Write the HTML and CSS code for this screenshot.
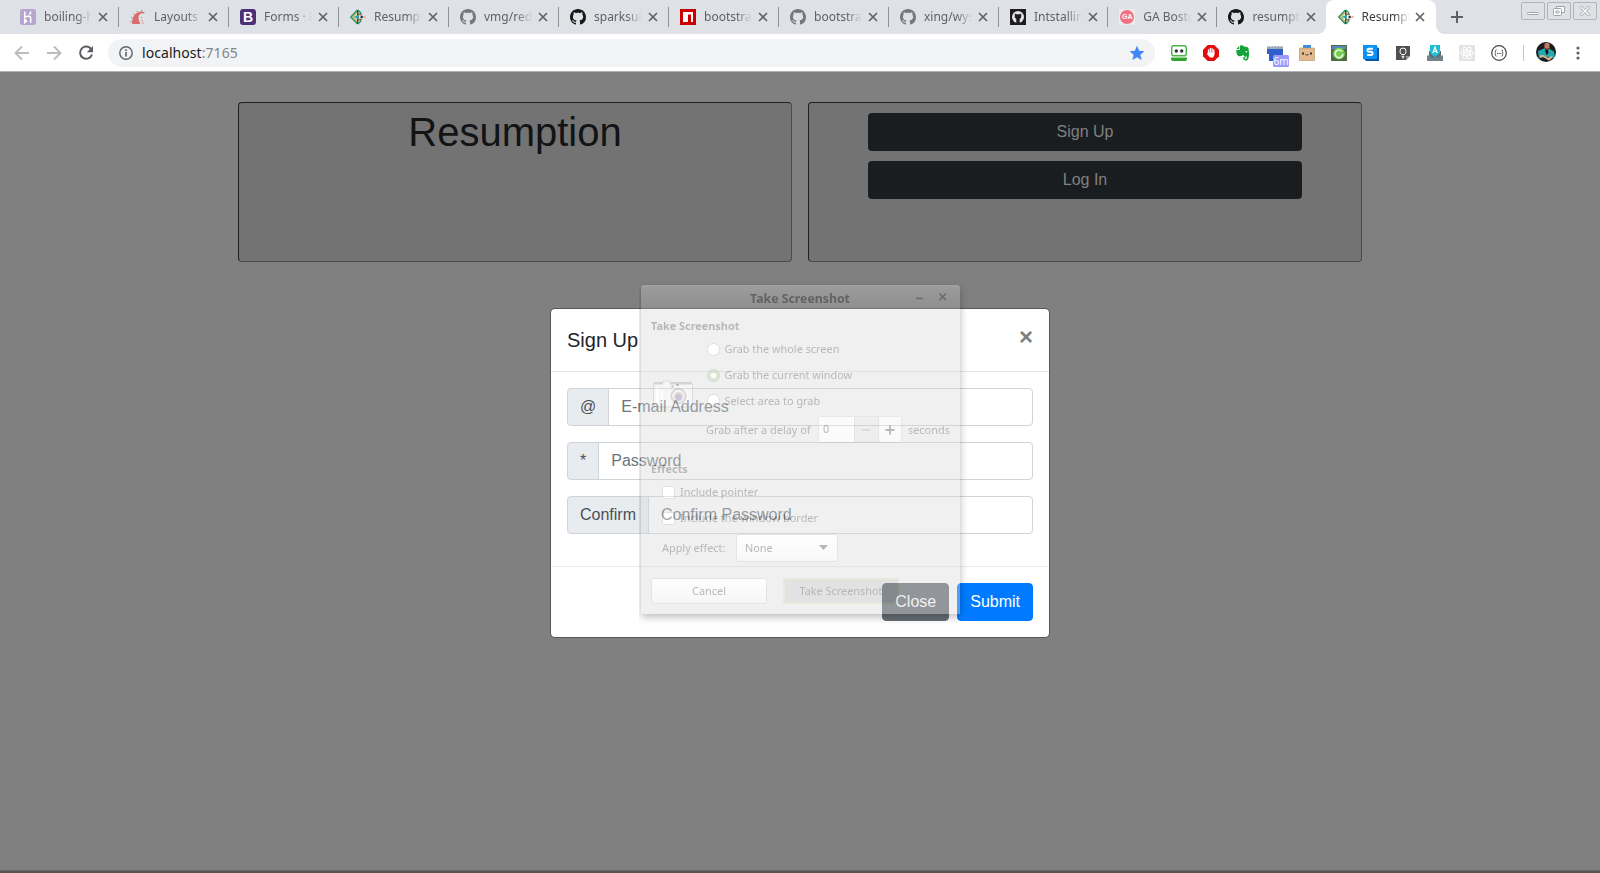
FILE: index.html
```html
<!DOCTYPE html>
<html lang="en">
<head>
<meta charset="utf-8">
<title>Resumption</title>
<link rel="stylesheet" href="styles.css">
</head>
<body>
<svg class="defs" width="0" height="0">
  <symbol id="github" viewBox="0 0 16 16"><path d="M8 0C3.58 0 0 3.58 0 8c0 3.54 2.29 6.53 5.47 7.59.4.07.55-.17.55-.38 0-.19-.01-.82-.01-1.49-2.01.37-2.53-.49-2.69-.94-.09-.23-.48-.94-.82-1.13-.28-.15-.68-.52-.01-.53.63-.01 1.08.58 1.23.82.72 1.21 1.87.87 2.33.66.07-.52.28-.87.51-1.07-1.78-.2-3.64-.89-3.64-3.95 0-.87.31-1.59.82-2.15-.08-.2-.36-1.02.08-2.12 0 0 .67-.21 2.2.82.64-.18 1.32-.27 2-.27s1.36.09 2 .27c1.53-1.04 2.2-.82 2.2-.82.44 1.1.16 1.92.08 2.12.51.56.82 1.27.82 2.15 0 3.07-1.87 3.75-3.65 3.95.29.25.54.73.54 1.48 0 1.07-.01 1.93-.01 2.2 0 .21.15.46.55.38A8.01 8.01 0 0 0 16 8c0-4.42-3.58-8-8-8z"/></symbol>
  <symbol id="close" viewBox="0 0 10 10"><path d="M1 1l8 8M9 1L1 9" stroke="#5f6368" stroke-width="1.7" fill="none"/></symbol>
  <symbol id="diamond" viewBox="0 0 16 16">
    <path d="M7.500 1L1 8l6.500 7" fill="none" stroke="#2f9a72" stroke-width="1.700"/>
    <path d="M7 3.500L3 8l4 4.500" fill="none" stroke="#e4ad42" stroke-width="1.300"/>
    <path d="M7.800 1v14" fill="none" stroke="#1c4a50" stroke-width="1.500"/>
    <path d="M8 1l3 3-5 4 5 4-3 3" fill="none" stroke="#2f9a72" stroke-width="1.200"/>
    <path d="M4.500 8h4" stroke="#28aebd" stroke-width="1.600"/>
    <path d="M10 5.200l1.700 1M10 10.800l1.700-1" stroke="#c64a2c" stroke-width="1.400"/>
    <path d="M10.600 8h2.200" stroke="#26334b" stroke-width="2.200"/><path d="M13.500 8h2" stroke="#e7a06b" stroke-width="1.600"/>
  </symbol>
</svg>

<header class="browser">
  <div class="tabstrip">
    <div class="tab"><svg class="fav" viewBox="0 0 16 16"><rect width="16" height="16" rx="2" fill="#b8a5cf"/><path d="M4.700 2.500v5.700c3-1.300 6-1.300 6 1v4.500M4.700 10.300v3.200l1.800-1.600zM10.800 2.500c0 1.300-.5 2.200-1.400 3.100" fill="none" stroke="#fff" stroke-width="1.500"/></svg><span class="name">boiling-h</span><svg class="x"><use href="#close"/></svg></div>
    <div class="tab"><svg class="fav" viewBox="0 0 16 16"><path d="M2.200 15c-.3-6 2-11.300 8-12.300 1.800-.3 3.500.2 4.500 1l-.5.8c-4.500-1-6.700 2.500-5.200 7l1.300 3.500z" fill="#d96c6c"/><path d="M.5 12.500l1.300.3M1.300 8.500l1.300.5M3.300 4.800l1 1M7 1.800l.5 1.300M11.500 1.200l0 1.200M11 8.300l1 .3M11.500 11l1.200.6M12.300 14h1.300" stroke="#d96c6c" stroke-width="1"/></svg><span class="name">Layouts ·</span><svg class="x"><use href="#close"/></svg></div>
    <div class="tab"><span class="fav boot">B</span><span class="name">Forms · B</span><svg class="x"><use href="#close"/></svg></div>
    <div class="tab"><svg class="fav"><use href="#diamond"/></svg><span class="name">Resumpt</span><svg class="x"><use href="#close"/></svg></div>
    <div class="tab"><svg class="fav dim"><use href="#github"/></svg><span class="name">vmg/redc</span><svg class="x"><use href="#close"/></svg></div>
    <div class="tab"><svg class="fav"><use href="#github"/></svg><span class="name">sparksui</span><svg class="x"><use href="#close"/></svg></div>
    <div class="tab"><svg class="fav" viewBox="0 0 16 16"><path fill="#cb0000" d="M0 0h16v16H0z"/><path fill="#fff" d="M3 3h10v10h-2V5.500H8V13H3z"/></svg><span class="name">bootstrap</span><svg class="x"><use href="#close"/></svg></div>
    <div class="tab"><svg class="fav dim"><use href="#github"/></svg><span class="name">bootstrap</span><svg class="x"><use href="#close"/></svg></div>
    <div class="tab"><svg class="fav dim"><use href="#github"/></svg><span class="name">xing/wysi</span><svg class="x"><use href="#close"/></svg></div>
    <div class="tab slim"><svg class="fav" viewBox="0 0 16 16"><path fill="#1d1d1f" d="M0 0h16v16H0z"/><circle cx="8" cy="8" r="6" fill="#e4e4e4"/><path d="M4.800 4.500l1.400.8h3.600l1.400-.8v4L9.700 10v4H6.300v-4L4.800 8.500z" fill="#1d1d1f"/></svg><span class="name">Intstalling</span><svg class="x"><use href="#close"/></svg></div>
    <div class="tab slim"><span class="fav ga"><b>GA</b></span><span class="name">GA Bosto</span><svg class="x"><use href="#close"/></svg></div>
    <div class="tab slim last"><svg class="fav"><use href="#github"/></svg><span class="name">resumpt</span><svg class="x"><use href="#close"/></svg></div>
    <div class="tab active"><svg class="fav"><use href="#diamond"/></svg><span class="name">Resumpt</span><svg class="x"><use href="#close"/></svg></div>
    <svg class="plus" viewBox="0 0 12 12"><path d="M6 0v12M0 6h12" stroke="#5f6368" stroke-width="2"/></svg>
    <div class="winctl">
      <span><svg viewBox="0 0 22 16"><rect x="5.500" y="9.500" width="11" height="2" rx="1"/></svg></span>
      <span><svg viewBox="0 0 22 16"><path d="M8.500 6V3.500h8v6H14"/><rect x="5.500" y="5.500" width="8" height="7" rx="1"/><path d="M8 8h3v2H8z"/></svg></span>
      <span><svg viewBox="0 0 22 16"><path d="M6 4.500L7.500 3 11 6.500 14.500 3 16 4.500 12.500 8 16 11.500 14.500 13 11 9.500 7.500 13 6 11.500 9.500 8z"/></svg></span>
    </div>
  </div>
  <div class="toolbar">
    <div class="nav">
      <svg viewBox="0 0 16 16"><path d="M15 8H2M8 1.500L1.500 8 8 14.500" fill="none" stroke="#babcbe" stroke-width="1.900"/></svg>
      <svg viewBox="0 0 16 16"><path d="M1 8h13M8 1.500L14.500 8 8 14.500" fill="none" stroke="#babcbe" stroke-width="1.900"/></svg>
      <svg viewBox="0 0 16 16"><path d="M13.400 4.500A6.100 6.100 0 1 0 14 9.500" fill="none" stroke="#5a5e63" stroke-width="2"/><path d="M15 1v6.200H8.800z" fill="#5a5e63"/></svg>
    </div>
    <div class="omnibox">
      <svg class="info" viewBox="0 0 14 14"><circle cx="7" cy="7" r="6.200" fill="none" stroke="#5f6368" stroke-width="1.400"/><path d="M7 6v4.500M7 3.300v1.600" stroke="#5f6368" stroke-width="1.600"/></svg>
      <span class="url">localhost<i>:7165</i></span>
      <svg class="star" viewBox="0 0 16 16"><path fill="#4285f4" d="M8 .8l2.100 4.900 5.300.5-4 3.500 1.200 5.200L8 12.200l-4.600 2.700 1.200-5.200-4-3.500 5.300-.5z"/></svg>
    </div>
    <div class="exts">
      <svg viewBox="0 0 16 16"><rect x=".7" y=".7" width="14.600" height="10" rx="2" fill="#fff" stroke="#4db849" stroke-width="1.500"/><circle cx="5.300" cy="6" r="1.700" fill="#333"/><circle cx="10.700" cy="6" r="1.700" fill="#333"/><path d="M0 12.500h16V14q0 2-2 2H2q-2 0-2-2z" fill="#34a52c"/><path d="M1 12h14" stroke="#a8dfa2"/></svg>
      <svg viewBox="0 0 16 16"><path d="M4.700 0h6.600L16 4.700v6.600L11.300 16H4.700L0 11.300V4.700z" fill="#e40d0d"/><path d="M5.500 8V4.800M7.300 7.500V3.300M9.100 7.500V3.600M10.800 8.500V5" stroke="#fff" stroke-width="1.300" stroke-linecap="round"/><path d="M4.900 7.500h6.500v2.300Q11 12.900 8.300 12.800 6.500 12.700 4 9.300z" fill="#fff"/></svg>
      <svg viewBox="0 0 16 16"><path d="M5 .4Q7.500-.3 9 1.400q3.500.2 4.200 1.200 1.300 5 .5 9.800Q13 15.800 10.500 15.500q-2.500-.3-2.300-2.500.2-1.800 2.300-1.500v1.200q-1 0-.8.800.3.700 1.300.4 1.500-.8.500-2.600Q9.500 12 8 9.800 6.500 12 3.500 11 1.300 10 1.200 4.900h3Q5 4.800 5 3.900zM4.200 1v2.900H1.300z" fill="#12a437"/><ellipse cx="11.300" cy="6.700" rx="1" ry=".8" fill="#fff"/></svg>
      <svg class="badge" viewBox="0 0 22 22"><path d="M0 1h16v3H0z" fill="#9ea8ba"/><path d="M0 4h16v6l-6 6H2V9H0z" fill="#2f5fc8"/><path d="M0 1.500h16" stroke="#d4d9e0" stroke-dasharray="2 1"/><rect x="6" y="10" width="16" height="12" rx="1.500" fill="#9999ff"/><text x="14" y="20" text-anchor="middle">6m</text></svg>
      <svg viewBox="0 0 16 16"><path d="M4 0h8v4H4z" fill="#3b8de0"/><rect x=".3" y="3" width="15.400" height="13" rx="1" fill="#e5b98e" stroke="#a98c6c" stroke-width=".6"/><path d="M3 7.500h2v2H3zM11 7.500h2v2h-2z" fill="#333"/><path d="M6.500 9.300l.7.700h1.600l.7-.7" fill="none" stroke="#333"/></svg>
      <svg viewBox="0 0 16 16"><path d="M0 0h16v16H0z" fill="#4e6b41"/><path d="M1 1h14v3H1z" fill="#5a86c0"/><circle cx="8" cy="8.500" r="5" fill="#72cd50" stroke="#72cd50" stroke-width="2"/><path d="M11 6.500A3.800 3.800 0 1 0 11.800 9" fill="none" stroke="#e8f8df" stroke-width="1.600"/></svg>
      <svg viewBox="0 0 16 16"><path d="M14 2l2 1.500V16H3l-2-2z" fill="#0756a7"/><path d="M0 0h14v14H0z" fill="#0a93f5"/><path d="M9.800 3.700H6q-1.600 0-1.600 1.500T6 6.800h2q1.600 0 1.600 1.600T8 10H4.200" fill="none" stroke="#fff" stroke-width="2"/></svg>
      <svg viewBox="0 0 16 16"><path d="M1 1h14v10l-4 4H1z" fill="#505050"/><path d="M15 11h-4v4z" fill="#999"/><path d="M6.500 9.500Q4.800 8 5 6a3 3 0 0 1 6 0q.2 2-1.500 3.500zM6.500 11.300h3M7 12.800h2" fill="none" stroke="#fff" stroke-width="1"/></svg>
      <svg viewBox="0 0 16 16"><path d="M2 6h12v9H2z" fill="#5a6b75"/><path d="M0 10.500h3l1.500 2h7l1.500-2h3V16H0z" fill="#73818a"/><path d="M3 0h10v8L8 12.500 3 8z" fill="#1fbcd2"/><path d="M5.700 8.300L8 2.300l2.300 6M6.500 6.500h3" fill="none" stroke="#fff" stroke-width="1.200"/></svg>
      <svg viewBox="0 0 16 16"><path d="M0 0h16v16H0z" fill="#e3e3e3"/><g fill="none" stroke="#fff" stroke-width="1"><ellipse cx="8" cy="8" rx="6.500" ry="2.500"/><ellipse cx="8" cy="8" rx="6.500" ry="2.500" transform="rotate(60 8 8)"/><ellipse cx="8" cy="8" rx="6.500" ry="2.500" transform="rotate(120 8 8)"/></g><circle cx="8" cy="8" r="1.300" fill="#fff"/></svg>
      <svg viewBox="0 0 16 16"><circle cx="8" cy="8" r="7.300" fill="#fff" stroke="#444" stroke-width="1.200"/><path d="M5.500 4.800q-1.100 0-1 1.300.1 1.500-.8 1.900.9.400.8 1.900-.1 1.300 1 1.300M10.500 4.800q1.100 0 1 1.300-.1 1.500.8 1.900-.9.400-.8 1.900.1 1.300-1 1.300" fill="none" stroke="#555" stroke-width=".9"/><path d="M6 8.500h4.500" stroke="#444" stroke-width="1" stroke-dasharray="1 .7"/></svg>
    </div>
    <span class="divider"></span>
    <svg class="avatar" viewBox="0 0 20 20"><clipPath id="face"><circle cx="10" cy="10" r="10"/></clipPath><g clip-path="url(#face)"><path fill="#1b1b1e" d="M0 0h20v20H0z"/><path fill="#22aab0" d="M2 9l6-2.500h5l5 3 1 6-5 1-4-2-7 2z"/><path fill="#121417" d="M9 8l3 0 .5 3-2 2z"/><path fill="#c07c5c" d="M8.500 2q2.500-2.300 5 0v4q-1.200 2.300-2.500 2.300T8.500 6z"/><path d="M9 6.500q2 2 4 0" stroke="#5a3325" stroke-width="1.200" fill="none"/><path d="M4 14.500q3-1 5 .5l4 2.500 3-3" fill="none" stroke="#e2ad8b" stroke-width="2"/></g></svg>
    <svg class="dots" viewBox="0 0 4 14"><g fill="#5f6368"><circle cx="2" cy="2" r="1.600"/><circle cx="2" cy="7" r="1.600"/><circle cx="2" cy="12" r="1.600"/></g></svg>
  </div>
</header>

<main class="page">
  <section class="panel"><h1>Resumption</h1></section>
  <section class="panel actions"><button>Sign Up</button><button>Log In</button></section>
</main>
<div class="edge"></div>

<div class="modal">
  <div class="modal-header"><h5>Sign Up</h5><span class="modal-close">×</span></div>
  <div class="modal-body">
    <div class="group"><span class="addon">@</span><span class="field">E-mail Address</span></div>
    <div class="group"><span class="addon">*</span><span class="field">Password</span></div>
    <div class="group"><span class="addon">Confirm</span><span class="field">Confirm Password</span></div>
  </div>
  <div class="modal-footer"><button class="btn secondary">Close</button><button class="btn primary">Submit</button></div>
</div>

<div class="ghost">
<div class="dialog">
  <div class="titlebar"><span class="title">Take Screenshot</span><svg viewBox="0 0 32 10"><path d="M1 6.500h7M24.500 1.500l6.500 6.500M31 1.500L24.500 8" stroke="#444" stroke-width="1.500"/></svg></div>
  <div class="content">
    <div class="heading">Take Screenshot</div>
    <div class="grab">
      <svg class="camera" viewBox="0 0 40 30"><path d="M2 3h8V1h7v2h21q1.500 0 1.500 2v19q0 3-2.500 3H3q-2.500 0-2.500-3V5q0-2 1.500-2z" fill="#e9e9e9" stroke="#999" stroke-width=".8"/><path d="M1 2h9v2.500H1zM17 2h22v2.500H17z" fill="#8d9390"/><path d="M3 8h3v17H3zM8 11h2v14H8z" fill="#fafafa"/><circle cx="25.500" cy="16" r="9.500" fill="#d0d0d0" stroke="#fff"/><circle cx="25.500" cy="16" r="7" fill="#ddd" stroke="#888" stroke-width="1.200"/><circle cx="25.500" cy="16.500" r="4.800" fill="#999" stroke="#eee" stroke-width=".7"/><circle cx="25.500" cy="17.500" r="3" fill="#80609a"/><path d="M18.500 6.500h2M23 5h3" stroke="#555" stroke-width="2"/></svg>
      <div class="radios">
        <label><i></i>Grab the whole screen</label>
        <label><i class="on"></i>Grab the current window</label>
        <label><i></i>Select area to grab</label>
      </div>
    </div>
    <div class="delay"><span class="delay-text">Grab after a delay of</span><span class="spin"><span class="num">0</span><span class="step off"><svg viewBox="0 0 10 10"><path d="M.5 5h9" stroke="#999" stroke-width="1.600"/></svg></span><span class="step"><svg viewBox="0 0 10 10"><path d="M.5 5h9M5 .5v9" stroke="#444" stroke-width="1.800"/></svg></span></span><span>seconds</span></div>
    <div class="heading effects">Effects</div>
    <div class="checks">
      <label><i></i>Include pointer</label>
      <label><i></i>Include the window border</label>
    </div>
    <div class="apply"><span class="apply-text">Apply effect:</span><span class="combo">None<svg viewBox="0 0 9 5"><path d="M0 0h9L4.500 5z" fill="#444"/></svg></span></div>
    <div class="buttons"><span class="dbtn">Cancel</span><span class="dbtn suggested">Take Screenshot</span></div>
  </div>
</div>
</div>
</body>
</html>
```
FILE: styles.css
```css
* { box-sizing: border-box; }
body {
  margin: 0;
  height: 873px;
  overflow: hidden;
  display: flex;
  flex-direction: column;
  background: #808080;
  font-family: "Liberation Sans", Arial, sans-serif;
  font-size: 16px;
  line-height: 1.5;
  color: #212529;
}
svg { display: block; flex: none; }
.defs { position: absolute; }
button { font: inherit; margin: 0; }

/* Browser chrome */
.browser { height: 72px; flex: none; font-family: "Noto Sans", sans-serif; border-bottom: 1px solid #b1b2b3; background: #fff; }
.tabstrip { height: 34px; display: flex; background: #dee1e6; padding-left: 8px; }
.tab { position: relative; width: 110px; height: 34px; flex: none; display: flex; align-items: center; padding: 0 9px 0 12px; font-size: 12px; color: #5f6368; }
.tab.slim { width: 109.200px; }
.tab::after { content: ""; position: absolute; right: -1px; top: 7px; width: 1px; height: 20px; background: #909399; }
.tab.last::after { display: none; }
.fav { width: 16px; height: 16px; flex: none; color: #191717; fill: #191717; }
.fav.dim { fill: #76777a; }
.name { width: 49px; margin: -1px 5px 0 8px; overflow: hidden; white-space: nowrap; line-height: 20px; -webkit-mask-image: linear-gradient(90deg, #000 66%, transparent 98%); mask-image: linear-gradient(90deg, #000 66%, transparent 98%); }
.x { width: 10px; height: 10px; }
.boot { background: #4d2f77; border-radius: 3px; color: #fff; font: bold 14px/16px "Liberation Sans", sans-serif; text-align: center; }
.ga { background: #ececee; display: flex; align-items: center; justify-content: center; }
.ga b { width: 14px; height: 14px; border-radius: 50%; background: #f07282; color: #fff; font: bold 7px/14px "Liberation Sans", sans-serif; text-align: center; }
.tab.active { background: #fff; border-radius: 8px 8px 0 0; color: #3c4043; }
.tab.active .name { margin-right: 4px; }
.tab.active::before, .tab.active::after { content: ""; display: block; position: absolute; top: auto; bottom: 0; width: 8px; height: 8px; }
.tab.active::before { left: -8px; background: radial-gradient(circle at 0 0, #dee1e6 7.500px, #fff 8px); }
.tab.active::after { right: -8px; background: radial-gradient(circle at 100% 0, #dee1e6 7.500px, #fff 8px); }
.plus { width: 12px; height: 12px; margin: 11px 0 0 15.400px; }
.winctl { display: flex; gap: 2px; margin: 2px 3px 0 auto; }
.winctl span { width: 24px; height: 18px; border: 1px solid #b2b4b8; border-radius: 2px; }
.winctl svg { width: 22px; height: 16px; fill: #fff; stroke: #a0a2a6; stroke-width: 1; }

.toolbar { height: 37px; display: flex; align-items: center; padding-left: 14px; }
.nav { display: flex; gap: 16px; }
.nav svg { width: 16px; height: 16px; }
.omnibox { width: 1047px; height: 28px; margin-left: 14px; border-radius: 14px; background: #f1f3f4; display: flex; align-items: center; padding: 0 10px 0 11px; }
.info { width: 14px; height: 14px; }
.url { margin-left: 9px; font-size: 14px; letter-spacing: .06px; line-height: 20px; color: #202124; flex: 1; }
.url i { font-style: normal; color: #80868b; }
.star { width: 16px; height: 16px; }
.exts { display: flex; gap: 16px; margin-left: 16px; }
.exts svg { width: 16px; height: 16px; }
.exts .badge { width: 22px; height: 22px; margin-right: -6px; margin-bottom: -6px; }
.badge text { font: 10px "Noto Sans", sans-serif; fill: #fff; }
.divider { width: 1px; height: 16px; background: #c5c7ca; margin-left: 16px; }
.avatar { width: 20px; height: 20px; margin-left: 12px; margin-top: -2px; }
.dots { width: 4px; height: 14px; margin-left: 20px; }

/* Page */
.page { flex: 1; width: 1140px; margin: 0 auto; padding: 30px 8px 0; display: flex; align-items: flex-start; gap: 16px; }
.panel { width: 554px; height: 160px; flex: none; border: 1px solid; border-color: #202020 #4b4b4b #4b4b4b #202020; border-radius: 4px; background: #737373; }
.panel h1 { margin: 5px 0 0; text-align: center; font-size: 40px; line-height: 48px; font-weight: 400; color: #111315; }
.actions { padding: 10px 59px; display: flex; flex-direction: column; gap: 10px; }
.actions button { height: 38px; border: 0; border-radius: 4px; background: #1a1d20; color: #808080; padding: 0; line-height: 24px; }
.edge { height: 3px; flex: none; background: #555; border-top: 1px solid #696969; }

/* Modal */
.modal { position: absolute; left: 550px; top: 308px; width: 500px; background: #fff; background-clip: padding-box; border: 1px solid rgba(0, 0, 0, .3); border-radius: 5px; }
.modal-header { height: 63px; padding: 16px; border-bottom: 1px solid #e4e7ea; display: flex; justify-content: space-between; }
.modal-header h5 { margin: 0; font-size: 20px; line-height: 30px; font-weight: 400; }
.modal-close { font-size: 24px; line-height: 24px; font-weight: 700; color: #7f7f7f; }
.modal-body { padding: 16px 16px 32px; display: flex; flex-direction: column; gap: 16px; }
.group { display: flex; height: 38px; line-height: 24px; }
.addon { padding: 6px 12px; border: 1px solid #ced4da; border-radius: 4px 0 0 4px; background: #e9ecef; color: #495057; margin-right: -1px; }
.field { flex: 1; padding: 6px 12px; border: 1px solid #ced4da; border-radius: 0 4px 4px 0; color: #6c757d; }
.modal-footer { padding: 16px; border-top: 1px solid #e9ecef; display: flex; justify-content: flex-end; gap: 8px; }
.btn { height: 38px; padding: 6px 12px; border: 1px solid; border-radius: 4px; color: #fff; line-height: 24px; }
.primary { background: #007bff; border-color: #007bff; }
.secondary { background: #666e76; border-color: #666e76; }

/* Fading desktop dialog */
.ghost { position: absolute; left: 639px; top: 277px; width: 329px; height: 350px; padding: 8px 8px 0 2px; overflow: hidden; opacity: .38; }
.dialog { height: 329px; width: 319px; border-radius: 4px 4px 0 0; background: #d9d9d9; box-shadow: 0 3px 9px rgba(0, 0, 0, .7), 0 0 1px 0 rgba(0, 0, 0, .3); font-family: "Noto Sans", sans-serif; font-size: 10.900px; color: #444; line-height: 16px; }
.titlebar { position: relative; height: 24px; border-radius: 4px 4px 0 0; background: linear-gradient(#cbcbcb, #a7a7a7); border-top: 1px solid #ddd; display: flex; align-items: center; justify-content: center; font-weight: 700; font-size: 12.300px; color: #333; padding: 3px 1px 0 0; }
.titlebar svg { position: absolute; right: 13px; top: 6px; width: 32px; height: 10px; }
.content { padding: 6px 9px 0 10px; }
.heading { height: 22px; line-height: 22px; font-weight: 700; }
.grab { display: flex; }
.camera { width: 40px; height: 30px; margin: 43px 14px 0 2px; }
.radios { margin-top: -.5px; }
.radios label, .checks label { display: flex; align-items: center; height: 25.700px; }
.radios i { width: 13px; height: 13px; border-radius: 50%; border: 1px solid #aaa; background: #fff; margin-right: 4.500px; }
.radios i.on { border: 4px solid #afc894; outline: 1px solid #999; outline-offset: -1px; }
.delay { display: flex; align-items: center; height: 32px; padding-left: 55px; white-space: nowrap; }
.delay-text { width: 112px; }
.spin { display: flex; width: 84px; height: 27px; border: 1px solid #c2c2c2; border-radius: 3px; margin-right: 6px; }
.num { width: 35px; background: #f6f6f6; padding: 4px 4px; }
.step { width: 23px; flex: 1; display: flex; align-items: center; justify-content: center; background: #f3f3f3; border-left: 1px solid #bbb; }
.step.off { background: #d5d5d5; }
.step svg { width: 10px; height: 10px; }
.effects { margin-top: 12px; }
.checks { padding-left: 11px; }
.checks i { width: 13px; height: 13px; border: 1px solid #b5b5b5; border-radius: 2px; background: #fff; margin-right: 5px; }
.apply { display: flex; align-items: center; height: 30px; margin-top: 2px; padding-left: 11px; }
.apply-text { width: 74px; }
.combo { width: 102px; height: 28px; border: 1px solid #bcbcbc; border-radius: 3px; background: linear-gradient(#fff, #eee); display: flex; align-items: center; justify-content: space-between; padding: 0 9px 0 8px; }
.combo svg { width: 9px; height: 5px; }
.buttons { display: flex; gap: 16px; margin-top: 15.500px; }
.dbtn { width: 116px; height: 26px; border: 1px solid #bcbcbc; border-radius: 2px; background: linear-gradient(#fff, #e8e8e8); text-align: center; line-height: 23px; }
.dbtn.suggested { background: #b4b4b4; border: 2px solid #bccba6; line-height: 21px; }
```
